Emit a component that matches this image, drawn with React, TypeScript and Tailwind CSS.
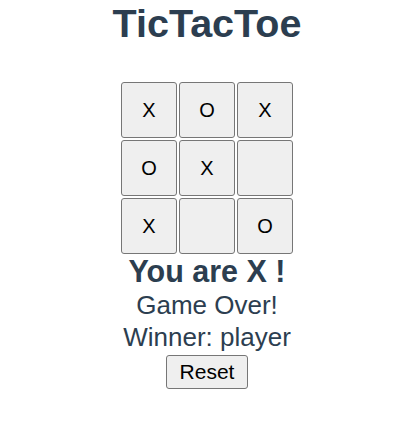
const board = ["X", "O", "X", "O", "X", "", "X", "", "O"];

export default function App() {
  return (
    <div className="min-h-screen bg-white pl-[3px] text-center text-[#2c3e50] font-['Liberation_Sans',Arial,sans-serif]">
      <h1 className="text-[39.5px] font-bold leading-[46px]">TicTacToe</h1>

      <div className="mx-auto mt-[36px] grid w-[172px] grid-cols-3 gap-[2px]">
        {board.map((cell, i) => (
          <button
            key={i}
            className="flex h-[56px] w-[56px] items-center justify-center rounded-[3px] border border-[#767676] bg-[#efefef] text-[20px] text-black"
          >
            {cell}
          </button>
        ))}
      </div>

      <div className="text-[30.5px] font-bold leading-[34px]">You are X !</div>
      <div className="mt-px text-[26px] leading-[32px]">Game Over!</div>
      <div className="text-[26px] leading-[32px]">Winner: player</div>
      <button className="mt-[2px] h-[34px] rounded-[3px] border border-[#767676] bg-[#efefef] px-[13px] text-[21px] text-black">
        Reset
      </button>
    </div>
  );
}
